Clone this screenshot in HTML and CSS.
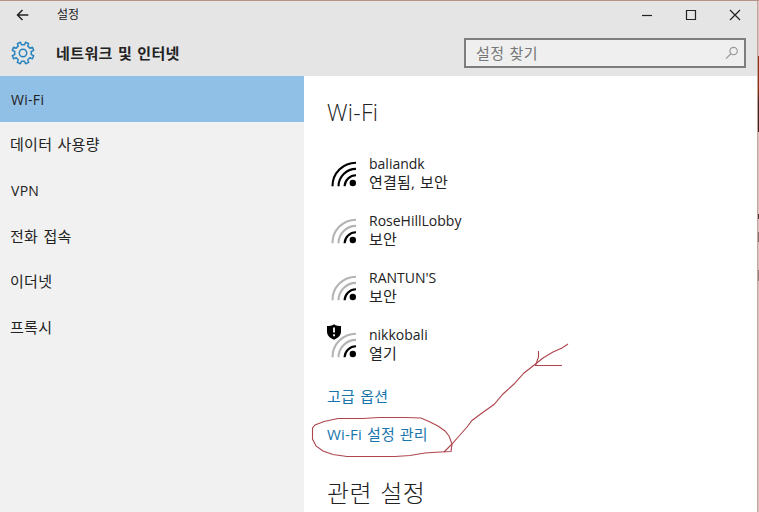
FILE: index.html
```html
<!DOCTYPE html>
<html lang="ko">
<head>
<meta charset="utf-8">
<title>설정</title>
<link rel="stylesheet" href="styles.css">
</head>
<body>
<svg class="defs" width="0" height="0" aria-hidden="true">
  <symbol id="wifi" viewBox="0 0 26 26">
    <g fill="none" stroke-width="2.1">
      <path class="outer" d="M1.5 25.2A23.5 23.5 0 0 1 25 1.7"/>
      <path class="outer" d="M7.5 25.2A17.5 17.5 0 0 1 25 7.9"/>
      <path class="inner" d="M13.6 25.2A11.4 11.4 0 0 1 25 14.2"/>
    </g>
    <circle cx="21.8" cy="22" r="3.2" fill="#000"/>
  </symbol>
</svg>
<div class="screen">
  <div class="window">
    <header class="header">
      <div class="titlebar">
        <svg class="back" width="14" height="12" viewBox="0 0 14 12"><path d="M12.3 6H1.5M6.5 1L1.5 6l5 5"/></svg>
        <span class="app-name">설정</span>
        <div class="controls">
          <svg width="12" height="12" viewBox="0 0 12 12"><path d="M1 6.5h10"/></svg>
          <svg width="12" height="12" viewBox="0 0 12 12"><path d="M1.5 1.5h9v9h-9z"/></svg>
          <svg width="12" height="12" viewBox="0 0 12 12"><path d="M1 1l10 10M11 1L1 11"/></svg>
        </div>
      </div>
      <div class="headrow">
        <svg class="gear" width="24" height="24" viewBox="-12 -12 24 24">
          <path d="M8.200 1.500L10.700 2.600 9.400 5.700 6.800 4.700Q6 6 4.700 6.800L5.700 9.400 2.600 10.700 1.500 8.200Q0 8.500-1.500 8.200L-2.600 10.700-5.700 9.400-4.700 6.800Q-6 6-6.800 4.700L-9.400 5.700-10.700 2.600-8.200 1.500Q-8.500 0-8.200-1.500L-10.700-2.600-9.400-5.700-6.800-4.700Q-6-6-4.700-6.800L-5.700-9.400-2.600-10.700-1.500-8.200Q0-8.500 1.500-8.200L2.600-10.700 5.700-9.400 4.700-6.800Q6-6 6.800-4.700L9.400-5.700 10.700-2.600 8.200-1.500Q8.500 0 8.200 1.500z"/>
          <circle r="3.700"/>
        </svg>
        <span class="page-name">네트워크 및 인터넷</span>
        <div class="search">
          <span>설정 찾기</span>
          <svg width="14" height="14" viewBox="0 0 14 14"><circle cx="8.600" cy="5" r="3.700"/><path d="M6 7.700L1 12.600"/></svg>
        </div>
      </div>
    </header>
    <div class="body">
      <nav class="sidebar">
        <a class="item active latin">Wi-Fi</a>
        <a class="item">데이터 사용량</a>
        <a class="item latin">VPN</a>
        <a class="item">전화 접속</a>
        <a class="item">이더넷</a>
        <a class="item">프록시</a>
      </nav>
      <main class="content">
        <h1 class="title">Wi-Fi</h1>
        <div class="networks">
          <div class="network">
            <svg class="signal full"><use href="#wifi"/></svg>
            <div><div class="ssid">baliandk</div><div class="state">연결됨, 보안</div></div>
          </div>
          <div class="network">
            <svg class="signal"><use href="#wifi"/></svg>
            <div><div class="ssid">RoseHillLobby</div><div class="state">보안</div></div>
          </div>
          <div class="network">
            <svg class="signal"><use href="#wifi"/></svg>
            <div><div class="ssid">RANTUN'S</div><div class="state">보안</div></div>
          </div>
          <div class="network">
            <svg class="signal"><use href="#wifi"/></svg>
            <svg class="shield" width="16" height="16" viewBox="0 0 16 16"><path d="M8 .3C6 1.800 3.500 2 1 2v5.500c0 4 3 6.500 7 8.200 4-1.700 7-4.200 7-8.200V2C12.500 2 10 1.800 8 .3z"/><path class="mark" d="M8 3.500v5M8 10.300v2"/></svg>
            <div><div class="ssid">nikkobali</div><div class="state">열기</div></div>
          </div>
        </div>
        <a class="link">고급 옵션</a>
        <a class="link manage">Wi-Fi 설정 관리</a>
        <h2 class="related">관련 설정</h2>
      </main>
    </div>
  </div>
  <div class="behind"><i class="photo"></i><i class="speck s1"></i><i class="speck s2"></i><i class="speck s3"></i></div>
  <svg class="ink" width="759" height="512" viewBox="0 0 759 512">
    <path d="M338 418.500L324 421.500 315 425 312.500 428 312.500 439 316 446 323 451 333 454.500 347 456.500H395L410 455.500 425 453 440 452 451 451.500 452 444 449 436 445 431 438 426 429 421.500 421 418 405 417.500 379 417.500 363 418.500z"/>
    <path d="M444 452L451 445 460 435 467 427 472 420.500 482 413 494 404.500 503 394 514 384 524 373 533 366 543 358 553 352 562 348 568 344"/>
    <path d="M538.500 351L538.500 357 535.500 365.500H562"/>
  </svg>
</div>
</body>
</html>
```
FILE: styles.css
```css
* { box-sizing: border-box; }
body {
  margin: 0;
  overflow: hidden;
  background: #fff;
  color: #222;
  font: 15px/18px "Open Sans", "Noto Sans CJK KR", sans-serif;
  white-space: nowrap;
}
svg { display: block; flex: none; }
.defs { position: absolute; }
.screen {
  position: relative;
  display: flex;
  width: 759px;
  height: 512px;
  overflow: hidden;
  border-top: 1px solid #b39386;
}
.window { width: 757px; }
.behind {
  position: relative;
  width: 2px;
  background: #d5c6c2;
  border-left: 1px solid #c6a69b;
}
.behind i { position: absolute; left: 0; width: 1px; }
.photo { top: 55px; height: 76px; background: linear-gradient(#8e330c 0 45%, #3d2220 60%); }
.speck { background: #4a3b3a; }
.s1 { top: 213px; height: 5px; }
.s2 { top: 231px; height: 10px; opacity: .6; }
.s3 { top: 269px; height: 11px; opacity: .5; }

.header { height: 75px; background: #e5e5e5; }
.titlebar {
  display: flex;
  align-items: center;
  height: 28px;
  padding: 0 16px;
}
.titlebar svg { fill: none; stroke: #222; stroke-width: 1.2; }
.titlebar .back { stroke-width: 1.5; }
.app-name { margin-left: 27px; font-size: 12px; }
.controls { display: flex; gap: 32px; margin-left: auto; }
.headrow {
  display: flex;
  align-items: center;
  height: 48px;
  padding: 0 11px 0 11px;
}
.gear { fill: none; stroke: #2882bd; stroke-width: 1.5; stroke-linejoin: round; }
.page-name { margin-left: 21px; font-size: 15px; font-weight: 700; letter-spacing: .4px; word-spacing: .8px; }
.search {
  display: flex;
  align-items: center;
  justify-content: space-between;
  width: 282px;
  height: 30px;
  margin-left: auto;
  padding: 0 5px 1px 10px;
  background: #efefef;
  border: 2px solid #7d7d7d;
  color: #777;
  letter-spacing: .4px;
  word-spacing: .8px;
}
.search svg { fill: none; stroke: #999; stroke-width: 1.2; }

.body { display: flex; height: 436px; }
.sidebar { width: 304px; background: #f1f1f1; }
.item {
  display: flex;
  align-items: center;
  height: 45.6px;
  padding-left: 10px;
  letter-spacing: .3px;
  word-spacing: 1px;
}
.latin { padding-left: 11px; font-size: 14px; padding-top: 2px; }
.active { background: #91c0e7; }
.content { padding-left: 23px; }
.title {
  margin: 20px 0 0;
  font-size: 23px;
  font-weight: 300;
  line-height: 32px;
  letter-spacing: .3px;
}
.networks { display: grid; grid-auto-rows: 57px; margin-top: 27px; }
.network { position: relative; display: flex; gap: 12px; padding-left: 4px; }
.network .ssid { font-size: 14px; line-height: 18px; }
.state { font-size: 15px; line-height: 18px; letter-spacing: .2px; word-spacing: .8px; }
.signal { width: 26px; height: 26px; margin-top: 6px; stroke: #b4b4b4; }
.signal.full { stroke: #000; }
.inner { stroke: #000; }
circle { stroke: none; }
.gear circle { stroke: #2882bd; }
.search circle { stroke: #999; }
.shield { position: absolute; left: -1px; top: -2px; }
.shield .mark { stroke: #fff; stroke-width: 1.8; }
.link {
  display: block;
  height: 38px;
  margin-top: 3px;
  color: #1976ad;
  font-size: 15px;
  line-height: 20px;
  letter-spacing: .3px;
  word-spacing: .8px;
}
.manage { margin-top: 0; letter-spacing: .2px; }
.related { margin: 14px 0 0; font-size: 24px; font-weight: 300; line-height: 34px; letter-spacing: .3px; word-spacing: 2px; }
.ink {
  position: absolute;
  left: 0;
  top: -1px;
  fill: none;
  stroke: #ae454d;
  stroke-width: 1.1;
}
```
